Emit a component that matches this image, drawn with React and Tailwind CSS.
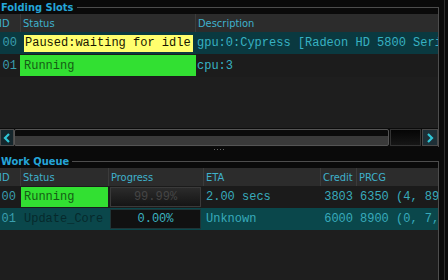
import React from "react";

const cond = "font-['DejaVu_Sans_Condensed','DejaVu_Sans',sans-serif]";
const mono = "font-['Liberation_Mono',monospace]";

/** group box title with the frame line running off to the right */
function GroupTitle({ label, h, lineTop }) {
  return (
    <div className={"flex items-start " + h}>
      <span className={"text-[#25a5d8] font-bold text-[11px] leading-[11px] pl-[1px] pr-[3px] " + cond + " " + lineTop.text}>
        {label}
      </span>
      <div className={"flex-1 h-px bg-[#4d4d4d] " + lineTop.line} />
      <div className={"w-px self-stretch bg-[#4d4d4d] " + lineTop.line} />
    </div>
  );
}

function HeadCell({ w, children, first }) {
  return (
    <div className={"h-full flex items-center " + w + (first ? "" : " border-l border-[#3b3b3b] pl-[2px]")}>
      <span className={"text-[#3fb2cc] text-[11px] leading-none whitespace-nowrap " + cond}>{children}</span>
    </div>
  );
}

function Chevron({ dir }) {
  return (
    <svg width="8" height="10" viewBox="0 0 8 10">
      <polyline
        points={dir === "left" ? "6,1 2,5 6,9" : "2,1 6,5 2,9"}
        fill="none"
        stroke="#2fc6d6"
        strokeWidth="2.2"
      />
    </svg>
  );
}

function SlotsPanel() {
  return (
    <div className="flex flex-col">
      <GroupTitle label="Folding Slots" h="h-[14px]" lineTop={{ text: "mt-[2px]", line: "mt-[7px]" }} />
      <div className="flex border-r border-[#4d4d4d]">
        <div className="w-[438px] flex flex-col">
          {/* header */}
          <div className="h-[18px] bg-[#2c2c2c] flex">
            <div className="w-[20px] h-full flex items-center overflow-hidden">
              <span className={"text-[#3fb2cc] text-[11px] leading-none ml-[-1px] " + cond}>ID</span>
            </div>
            <HeadCell w="w-[175px]">Status</HeadCell>
            <HeadCell w="flex-1">Description</HeadCell>
          </div>
          {/* row 00 */}
          <div className={"h-[22px] bg-[#0a3940] flex text-[12px] leading-none " + mono}>
            <div className="w-[20px] flex items-center justify-end pr-[3px] text-[#3a9fae]">00</div>
            <div className="w-[175px] flex items-center pl-[4px] pr-[2px]">
              <div className="h-[17px] w-full bg-[#ffff6e] flex items-center pl-[1px] text-[#161600] whitespace-nowrap overflow-hidden">
                Paused:waiting for idle
              </div>
            </div>
            <div className="flex-1 flex items-center pl-[2px] text-[#37b1c2] whitespace-nowrap overflow-hidden">
              gpu:0:Cypress [Radeon HD 5800 Series]
            </div>
          </div>
          {/* row 01 */}
          <div className={"h-[23px] bg-[#1c1c1c] flex text-[12px] leading-none " + mono}>
            <div className="w-[20px] flex items-center justify-end pr-[3px] text-[#3a9fae]">01</div>
            <div className="w-[176px] py-[1px]">
              <div className="h-full bg-[#32e032] flex items-center pl-[4px] text-[#155c15]">Running</div>
            </div>
            <div className="flex-1 flex items-center pl-[1px] text-[#37b1c2]">cpu:3</div>
          </div>
          <div className="h-[51px] bg-[#1e1e1e]" />
          {/* horizontal scrollbar */}
          <div className="h-[19px] flex bg-[#0c0c0c] pt-[1px]">
            <div className="w-[14px] h-[17px] bg-[#15262c] border border-[#4a4a4a] flex items-center justify-center">
              <Chevron dir="left" />
            </div>
            <div className="w-[375px] h-[17px] border border-[#555] rounded-[2px] bg-[linear-gradient(#0b0b0b_0%,#0b0b0b_42%,#3a3a3a_42%,#3a3a3a_100%)]" />
            <div className="flex-1 h-[17px] border border-[#333] bg-[linear-gradient(#050505_0%,#161616_100%)] mx-[1px]" />
            <div className="w-[16px] h-[17px] bg-[#1e2f36] border border-[#4a4a4a] flex items-center justify-center">
              <Chevron dir="right" />
            </div>
          </div>
        </div>
      </div>
    </div>
  );
}

function Splitter() {
  return (
    <div className="h-[4px] flex justify-center items-center">
      <div className="flex gap-[2px] ml-[-2px]">
        <span className="w-px h-px bg-[#666]" />
        <span className="w-px h-px bg-[#666]" />
        <span className="w-px h-px bg-[#666]" />
        <span className="w-px h-px bg-[#666]" />
      </div>
    </div>
  );
}

const queue = [
  { id: "00", status: "Running", progress: "99.99%", eta: "2.00 secs", credit: "3803", prcg: "6350 (4, 89, 12)" },
  { id: "01", status: "Update_Core", progress: "0.00%", eta: "Unknown", credit: "6000", prcg: "8900 (0, 7, 41)" },
];

function QueuePanel() {
  return (
    <div className="flex flex-col flex-1">
      <GroupTitle label="Work Queue" h="h-[17px]" lineTop={{ text: "mt-[5px]", line: "mt-[10px]" }} />
      <div className="flex-1 flex border-r border-[#4d4d4d]">
        <div className="w-[438px] flex flex-col bg-[#1e1e1e]">
          <div className="h-[18px] bg-[#2c2c2c] flex">
            <div className="w-[20px] h-full flex items-center overflow-hidden">
              <span className={"text-[#3fb2cc] text-[11px] leading-none ml-[-1px] " + cond}>ID</span>
            </div>
            <HeadCell w="w-[88px]">Status</HeadCell>
            <HeadCell w="w-[95px]">Progress</HeadCell>
            <HeadCell w="w-[117px]">ETA</HeadCell>
            <HeadCell w="w-[36px]">Credit</HeadCell>
            <HeadCell w="flex-1">PRCG</HeadCell>
          </div>
          {queue.map((q, i) => {
            const sel = i === 1;
            return (
              <div
                key={q.id}
                className={"h-[22px] flex text-[12px] leading-none whitespace-nowrap " + mono + (sel ? " bg-[#0a474b]" : " bg-[#1b1b1b]")}
              >
                <div className="w-[20px] flex items-center justify-end pr-[4px] text-[#3a9fae]">{q.id}</div>
                {sel ? (
                  <div className="w-[88px] flex items-center pl-[4px] text-[#06292b] overflow-hidden">{q.status}</div>
                ) : (
                  <div className="w-[88px] py-[1px] pl-[1px]">
                    <div className="h-full bg-[#32e032] flex items-center pl-[3px] text-[#155c15]">{q.status}</div>
                  </div>
                )}
                <div className="w-[95px] px-[2px] py-[1px]">
                  {sel ? (
                    <div className="h-full bg-[#111] border border-[#1f3436] flex items-center justify-center text-[#3cb4c0]">
                      {q.progress}
                    </div>
                  ) : (
                    <div className="h-full border border-[#3a3a3a] bg-[linear-gradient(#2b2b2b,#151515)] flex items-center justify-center text-[#454545]">
                      {q.progress}
                    </div>
                  )}
                </div>
                <div className="w-[117px] flex items-center pl-[3px] text-[#38abbb]">{q.eta}</div>
                <div className="w-[36px] flex items-center justify-end pr-[3px] text-[#38abbb]">{q.credit}</div>
                <div className="flex-1 flex items-center pl-[4px] text-[#38abbb] overflow-hidden">{q.prcg}</div>
              </div>
            );
          })}
        </div>
      </div>
    </div>
  );
}

export default function App() {
  return (
    <div className="w-[448px] h-[280px] overflow-hidden bg-[#0a0a0a] flex">
      <div className="w-[439px] flex flex-col">
        <SlotsPanel />
        <Splitter />
        <QueuePanel />
      </div>
      <div className="w-[5px]" />
      <div className="w-px bg-[#2e2e2e]" />
      <div className="flex-1" />
    </div>
  );
}
